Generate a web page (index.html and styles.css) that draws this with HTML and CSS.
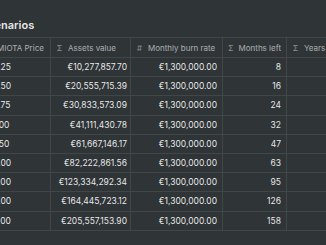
FILE: index.html
```html
<!DOCTYPE html>
<html>
<head>
<meta charset="utf-8">
<link rel="stylesheet" href="styles.css">
</head>
<body>
<div class="wrap">
  <div class="title">Scenarios</div>
  <div class="table">
    <div class="row head">
      <div class="cell c1"><span class="label">MIOTA Price</span></div>
      <div class="cell c2"><span class="ico">Σ</span><span class="label">Assets value</span></div>
      <div class="cell c3"><span class="ico hash">#</span><span class="label">Monthly burn rate</span></div>
      <div class="cell c4"><span class="ico">Σ</span><span class="label">Months left</span></div>
      <div class="cell c5"><span class="ico">Σ</span><span class="label">Years left</span></div>
    </div>
    <div class="row"><div class="cell c1">0.25</div><div class="cell c2 num">€10,277,857.70</div><div class="cell c3 num">€1,300,000.00</div><div class="cell c4 num">8</div><div class="cell c5 num">0.67</div></div>
    <div class="row"><div class="cell c1">0.50</div><div class="cell c2 num">€20,555,715.39</div><div class="cell c3 num">€1,300,000.00</div><div class="cell c4 num">16</div><div class="cell c5 num">1.33</div></div>
    <div class="row"><div class="cell c1">0.75</div><div class="cell c2 num">€30,833,573.09</div><div class="cell c3 num">€1,300,000.00</div><div class="cell c4 num">24</div><div class="cell c5 num">2.00</div></div>
    <div class="row"><div class="cell c1">1.00</div><div class="cell c2 num">€41,111,430.78</div><div class="cell c3 num">€1,300,000.00</div><div class="cell c4 num">32</div><div class="cell c5 num">2.67</div></div>
    <div class="row"><div class="cell c1">1.50</div><div class="cell c2 num">€61,667,146.17</div><div class="cell c3 num">€1,300,000.00</div><div class="cell c4 num">47</div><div class="cell c5 num">3.92</div></div>
    <div class="row"><div class="cell c1">2.00</div><div class="cell c2 num">€82,222,861.56</div><div class="cell c3 num">€1,300,000.00</div><div class="cell c4 num">63</div><div class="cell c5 num">5.25</div></div>
    <div class="row"><div class="cell c1">3.00</div><div class="cell c2 num">€123,334,292.34</div><div class="cell c3 num">€1,300,000.00</div><div class="cell c4 num">95</div><div class="cell c5 num">7.92</div></div>
    <div class="row"><div class="cell c1">4.00</div><div class="cell c2 num">€164,445,723.12</div><div class="cell c3 num">€1,300,000.00</div><div class="cell c4 num">126</div><div class="cell c5 num">10.50</div></div>
    <div class="row"><div class="cell c1">5.00</div><div class="cell c2 num">€205,557,153.90</div><div class="cell c3 num">€1,300,000.00</div><div class="cell c4 num">158</div><div class="cell c5 num">13.17</div></div>
  </div>
</div>
</body>
</html>
```
FILE: styles.css
```css
html, body {
  margin: 0;
  padding: 0;
  background: #2f3437;
  overflow: hidden;
}
body {
  width: 326px;
  height: 245px;
  font-family: Inter, "Liberation Sans", sans-serif;
  color: rgba(255, 255, 255, 0.9);
}
.wrap {
  margin-left: -12px;
  width: 400px;
}
.title {
  margin-left: -7px;
  padding-top: 18px;
  height: 19px;
  line-height: 14px;
  font-size: 11px;
  font-weight: 600;
  color: rgba(255, 255, 255, 0.9);
}
.table {
  border-top: 1px solid rgba(255, 255, 255, 0.09);
}
.row {
  display: grid;
  grid-template-columns: 63px 80px 92px 64px 100px;
  height: 19.2px;
}
.row.head {
  height: 20px;
}
.cell {
  border-bottom: 1px solid rgba(255, 255, 255, 0.09);
  border-right: 1px solid rgba(255, 255, 255, 0.09);
  display: flex;
  align-items: center;
  padding: 0 5px;
  font-size: 8.5px;
  white-space: nowrap;
  overflow: hidden;
}
.row .c2 {
  padding-right: 3px;
}
.head .cell {
  font-size: 8px;
  color: rgba(255, 255, 255, 0.6);
}
.head .c1 {
  padding-left: 9px;
}
.ico {
  width: 7px;
  margin-right: 5px;
  font-size: 8px;
  text-align: center;
  color: rgba(255, 255, 255, 0.45);
}
.num {
  justify-content: flex-end;
}
```
